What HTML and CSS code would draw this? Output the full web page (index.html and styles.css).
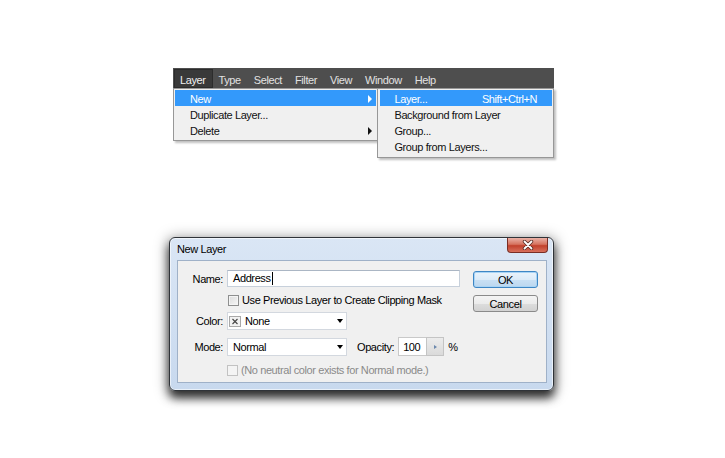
FILE: index.html
```html
<!DOCTYPE html>
<html lang="en">
<head>
  <meta charset="UTF-8" />
  <title>New Layer</title>
  <link rel="stylesheet" href="styles.css">
</head>
<body>
  <div class="page">

    <!-- Menu bar with open Layer > New menu -->
    <div class="menu">
      <div class="menubar">
        <span class="menubar-item active">Layer</span>
        <span class="menubar-item">Type</span>
        <span class="menubar-item">Select</span>
        <span class="menubar-item">Filter</span>
        <span class="menubar-item">View</span>
        <span class="menubar-item">Window</span>
        <span class="menubar-item">Help</span>
      </div>
      <div class="dropdowns">
        <ul class="dropdown main">
          <li class="hl"><span>New</span><span class="arrow"></span></li>
          <li><span>Duplicate Layer...</span></li>
          <li><span>Delete</span><span class="arrow"></span></li>
        </ul>
        <ul class="dropdown sub">
          <li class="hl"><span>Layer...</span><span class="key">Shift+Ctrl+N</span></li>
          <li><span>Background from Layer</span></li>
          <li><span>Group...</span></li>
          <li><span>Group from Layers...</span></li>
        </ul>
      </div>
    </div>

    <!-- New Layer dialog -->
    <div class="window">
      <div class="titlebar">
        <span class="title">New Layer</span>
        <span class="close">
          <svg width="12" height="10" viewBox="0 0 12 10">
            <path d="M2.5 1.5 L9.5 8.5 M9.5 1.5 L2.5 8.5" stroke="#5a2c24" stroke-width="3.4" stroke-linecap="round"/>
            <path d="M2.5 1.5 L9.5 8.5 M9.5 1.5 L2.5 8.5" stroke="#ffffff" stroke-width="1.8" stroke-linecap="round"/>
          </svg>
        </span>
      </div>

      <div class="panel">
        <div class="form">
          <div class="field row-name">
            <label class="label">Name:</label>
            <div class="textbox"><span class="caret">Address</span></div>
          </div>

          <div class="check-row row-clip">
            <span class="checkbox"></span>
            <span>Use Previous Layer to Create Clipping Mask</span>
          </div>

          <div class="field row-color">
            <label class="label">Color:</label>
            <div class="select">
              <span class="swatch">
                <svg width="8" height="7" viewBox="0 0 8 7">
                  <path d="M1.5 1 L6.5 6 M6.5 1 L1.5 6" stroke="#444" stroke-width="1.1"/>
                </svg>
              </span>
              <span class="select-text">None</span>
              <span class="down"></span>
            </div>
          </div>

          <div class="field row-mode">
            <label class="label">Mode:</label>
            <div class="select">
              <span class="select-text pad">Normal</span>
              <span class="down"></span>
            </div>
            <span class="opacity-label">Opacity:</span>
            <div class="number">100</div>
            <span class="stepper"><span class="tri"></span></span>
            <span class="percent">%</span>
          </div>

          <div class="check-row row-neutral disabled">
            <span class="checkbox"></span>
            <span>(No neutral color exists for Normal mode.)</span>
          </div>
        </div>

        <div class="buttons">
          <button class="btn default">OK</button>
          <button class="btn">Cancel</button>
        </div>
      </div>
    </div>

  </div>
</body>
</html>
```

FILE: styles.css
```css
* {
  box-sizing: border-box;
  margin: 0;
  padding: 0;
}

body {
  background: #ffffff;
  font-family: "Liberation Sans", Arial, sans-serif;
  font-size: 11px;
  letter-spacing: -0.4px;
  color: #000000;
}

.page {
  padding: 68px 0 40px 169px;
}

/* ---------- menu ---------- */

.menu {
  margin-left: 4px;
  width: 381px;
}

.menubar {
  display: flex;
  height: 20px;
  padding: 1px 0 0 1px;
  background: #4e4e4e;
}

.menubar-item {
  display: flex;
  align-items: center;
  height: 19px;
  padding: 2px 6px 0 5px;
  color: #e2e2e2;
  border: 1px solid transparent;
}

.menubar-item.active {
  background: #393939;
  border-color: #2c2c2c;
  color: #f0f0f0;
}

.dropdowns {
  display: flex;
  align-items: flex-start;
}

.dropdown {
  list-style: none;
  background: #f0f0f0;
  border: 1px solid #979797;
  box-shadow: 2px 2px 2px rgba(0, 0, 0, 0.25);
}

.dropdown.main {
  width: 206px;
  padding: 1px 1px 2px;
}

.dropdown.sub {
  width: 177px;
  margin-left: -1px;
  padding: 1px 1px 3px 2px;
}

.dropdown li {
  display: flex;
  align-items: center;
  justify-content: space-between;
  height: 16px;
  padding: 1px 4px 0 15px;
  color: #111111;
}

.dropdown.sub li {
  padding: 1px 15px 0 14px;
}

.dropdown li.hl {
  background: #3399fb;
  color: #ffffff;
}

.arrow {
  width: 0;
  height: 0;
  border-top: 4px solid transparent;
  border-bottom: 4px solid transparent;
  border-left: 4px solid currentColor;
}

/* ---------- dialog ---------- */

.window {
  display: flex;
  flex-direction: column;
  width: 385px;
  height: 154px;
  margin-top: 79px;
  padding: 0 6px 7px 7px;
  border: 1px solid #2f3338;
  border-radius: 6px;
  background: linear-gradient(#dae6f5, #c8d9ee);
  box-shadow: inset 0 0 0 1px rgba(255, 255, 255, 0.6),
              0 7px 10px 0 rgba(0, 0, 0, 0.75),
              0 2px 14px 2px rgba(0, 0, 0, 0.35);
}

.titlebar {
  display: flex;
  justify-content: space-between;
  align-items: flex-start;
  height: 22px;
}

.title {
  padding-top: 5px;
  color: #000000;
}

.close {
  display: flex;
  align-items: center;
  justify-content: center;
  width: 41px;
  height: 15px;
  margin-right: -1px;
  border: 1px solid #7a2e24;
  border-top: none;
  border-radius: 0 0 4px 4px;
  background: linear-gradient(#eab2a7 0%, #d6735f 45%, #c2412c 55%, #d8705c 100%);
}

.panel {
  display: flex;
  flex: 1;
  padding: 9px 8px 0 0;
  border: 1px solid #9fb1c8;
  background: #f0f0f0;
}

.form {
  flex: 1;
}

.field {
  display: flex;
  align-items: center;
}

.label {
  width: 45px;
  margin-right: 4px;
  text-align: right;
}

.row-name {
  height: 17px;
}

.textbox {
  display: flex;
  align-items: center;
  width: 233px;
  height: 17px;
  padding-left: 5px;
  background: #ffffff;
  border: 1px solid #c7d0db;
  border-top-color: #abb6c4;
}

.caret {
  padding-right: 1px;
  border-right: 1px solid #000000;
  line-height: 13px;
}

.check-row {
  display: flex;
  align-items: center;
  height: 14px;
  padding-left: 50px;
}

.row-clip {
  margin-top: 6px;
}

.checkbox {
  width: 11px;
  height: 11px;
  margin-right: 3px;
  border: 1px solid #8e8f8f;
  background: linear-gradient(135deg, #dcdcdc, #f6f6f6);
  box-shadow: inset 0 0 0 1px #f4f4f4;
}

.row-color {
  height: 18px;
  margin-top: 5px;
}

.row-mode {
  height: 19px;
  margin-top: 7px;
}

.select {
  display: flex;
  align-items: center;
  width: 120px;
  height: 18px;
  padding: 0 3px 0 1px;
  background: #ffffff;
  border: 1px solid #d3d8df;
}

.swatch {
  display: flex;
  align-items: center;
  justify-content: center;
  width: 12px;
  height: 11px;
  margin-right: 4px;
  border: 1px solid #a9a9a9;
  background: #f2f2f2;
}

.select-text {
  flex: 1;
}

.select-text.pad {
  padding-left: 4px;
}

.down {
  width: 0;
  height: 0;
  border-left: 3px solid transparent;
  border-right: 3px solid transparent;
  border-top: 4px solid #000000;
}

.opacity-label {
  margin-left: 10px;
}

.number {
  display: flex;
  align-items: center;
  width: 28px;
  height: 19px;
  margin-left: 4px;
  padding-left: 4px;
  background: #ffffff;
  border: 1px solid #c9c9c9;
  border-right: none;
}

.stepper {
  display: flex;
  align-items: center;
  justify-content: center;
  width: 18px;
  height: 19px;
  border: 1px solid #c4c4c4;
  background: linear-gradient(#ececec, #dadada);
}

.tri {
  width: 0;
  height: 0;
  border-top: 2.5px solid transparent;
  border-bottom: 2.5px solid transparent;
  border-left: 3px solid #6b88ad;
}

.percent {
  margin-left: 4px;
}

.row-neutral {
  margin-top: 7px;
  padding-left: 49px;
}

.disabled {
  color: #8a8a8a;
}

.disabled .checkbox {
  border-color: #c2c2c2;
  background: #f4f4f4;
  box-shadow: none;
}

.buttons {
  display: flex;
  flex-direction: column;
  gap: 7px;
  margin-top: 1px;
}

.btn {
  width: 65px;
  height: 17px;
  font-family: "Liberation Sans", Arial, sans-serif;
  font-size: 11px;
  letter-spacing: -0.4px;
  color: #000000;
  border: 1px solid #8a8a8a;
  border-radius: 3px;
  background: linear-gradient(#f4f4f4 0%, #ebebeb 50%, #dddddd 51%, #d2d2d2 100%);
}

.btn.default {
  border-color: #3e86c4;
  background: linear-gradient(#eaf3fb 0%, #dcebf8 50%, #c9e0f4 51%, #bcd7ef 100%);
  box-shadow: inset 0 0 0 1px #a9d4f5;
}
```
